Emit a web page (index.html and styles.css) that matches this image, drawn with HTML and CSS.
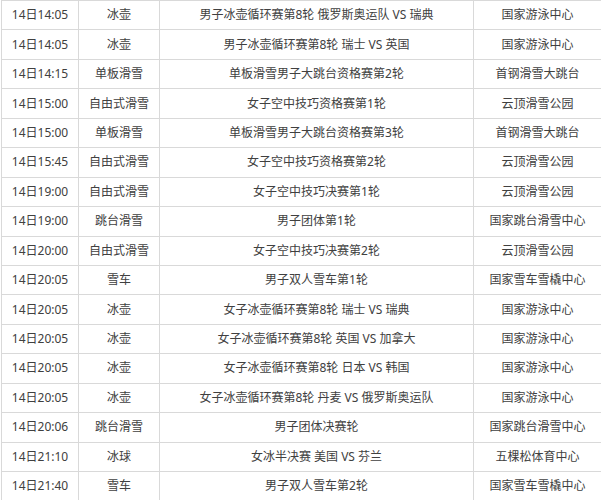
FILE: index.html
```html
<!DOCTYPE html>
<html lang="zh">
<head>
<meta charset="utf-8">
<link rel="stylesheet" href="styles.css">
</head>
<body>
<table class="schedule">
  <colgroup>
    <col class="c-time"><col class="c-sport"><col class="c-event"><col class="c-venue">
  </colgroup>
  <tbody>
    <tr><td>14日14:05</td><td>冰壶</td><td>男子冰壶循环赛第8轮 俄罗斯奥运队 VS 瑞典</td><td>国家游泳中心</td></tr>
    <tr><td>14日14:05</td><td>冰壶</td><td>男子冰壶循环赛第8轮 瑞士 VS 英国</td><td>国家游泳中心</td></tr>
    <tr><td>14日14:15</td><td>单板滑雪</td><td>单板滑雪男子大跳台资格赛第2轮</td><td>首钢滑雪大跳台</td></tr>
    <tr><td>14日15:00</td><td>自由式滑雪</td><td>女子空中技巧资格赛第1轮</td><td>云顶滑雪公园</td></tr>
    <tr><td>14日15:00</td><td>单板滑雪</td><td>单板滑雪男子大跳台资格赛第3轮</td><td>首钢滑雪大跳台</td></tr>
    <tr><td>14日15:45</td><td>自由式滑雪</td><td>女子空中技巧资格赛第2轮</td><td>云顶滑雪公园</td></tr>
    <tr><td>14日19:00</td><td>自由式滑雪</td><td>女子空中技巧决赛第1轮</td><td>云顶滑雪公园</td></tr>
    <tr><td>14日19:00</td><td>跳台滑雪</td><td>男子团体第1轮</td><td>国家跳台滑雪中心</td></tr>
    <tr><td>14日20:00</td><td>自由式滑雪</td><td>女子空中技巧决赛第2轮</td><td>云顶滑雪公园</td></tr>
    <tr><td>14日20:05</td><td>雪车</td><td>男子双人雪车第1轮</td><td>国家雪车雪橇中心</td></tr>
    <tr><td>14日20:05</td><td>冰壶</td><td>女子冰壶循环赛第8轮 瑞士 VS 瑞典</td><td>国家游泳中心</td></tr>
    <tr><td>14日20:05</td><td>冰壶</td><td>女子冰壶循环赛第8轮 英国 VS 加拿大</td><td>国家游泳中心</td></tr>
    <tr><td>14日20:05</td><td>冰壶</td><td>女子冰壶循环赛第8轮 日本 VS 韩国</td><td>国家游泳中心</td></tr>
    <tr><td>14日20:05</td><td>冰壶</td><td>女子冰壶循环赛第8轮 丹麦 VS 俄罗斯奥运队</td><td>国家游泳中心</td></tr>
    <tr><td>14日20:06</td><td>跳台滑雪</td><td>男子团体决赛轮</td><td>国家跳台滑雪中心</td></tr>
    <tr><td>14日21:10</td><td>冰球</td><td>女冰半决赛 美国 VS 芬兰</td><td>五棵松体育中心</td></tr>
    <tr><td>14日21:40</td><td>雪车</td><td>男子双人雪车第2轮</td><td>国家雪车雪橇中心</td></tr>
  </tbody>
</table>
</body>
</html>
```
FILE: styles.css
```css
html, body {
  margin: 0;
  padding: 0;
  background: #fff;
}
body {
  padding-left: 1px;
}
.schedule {
  border-collapse: collapse;
  table-layout: fixed;
  width: 600px;
  font-family: "Noto Sans", "Noto Sans CJK SC", sans-serif;
  font-size: 12px;
  color: #404040;
}
.c-time { width: 77px; }
.c-sport { width: 81px; }
.c-event { width: 314px; }
.c-venue { width: 128px; }
.schedule td {
  border: 1px solid #d9d9d9;
  height: 28.44px;
  padding: 0;
  text-align: center;
  vertical-align: middle;
  line-height: 16px;
  white-space: nowrap;
}
```
